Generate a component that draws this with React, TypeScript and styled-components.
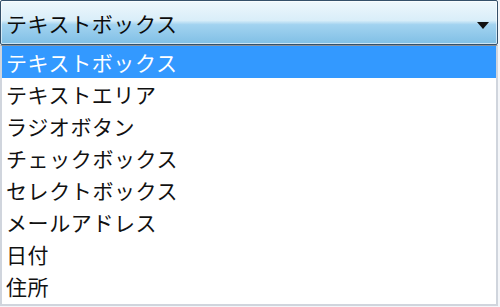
import * as React from "react";
import styled, { createGlobalStyle } from "styled-components";

const GlobalStyle = createGlobalStyle`
  html, body {
    margin: 0;
    padding: 0;
    background: #ffffff;
  }
  body {
    font-family: "Noto Sans CJK JP", "Noto Sans", sans-serif;
  }
`;

const Wrapper = styled.div`
  width: 500px;
  height: 307px;
  background: #f4f6f9;
  overflow: hidden;
`;

const Select = styled.div`
  width: 498px;
  display: flex;
  flex-direction: column;
`;

const Header = styled.div`
  height: 43px;
  border: 1px solid #34506a;
  border-radius: 2px;
  background: linear-gradient(
    to bottom,
    #eef7fc 0%,
    #d9eef9 45%,
    #a2d3f0 55%,
    #80bfe5 100%
  );
  display: flex;
  align-items: center;
  justify-content: space-between;
  padding: 0 8px 0 5px;
  box-shadow: inset 0 0 0 1px rgba(255, 255, 255, 0.6);
`;

const HeaderText = styled.span`
  font-size: 21px;
  color: #0c0c0c;
  letter-spacing: 0.6px;
  line-height: 1;
  padding-top: 1px;
`;

const Arrow = styled.span`
  width: 0;
  height: 0;
  border-left: 6px solid transparent;
  border-right: 6px solid transparent;
  border-top: 7px solid #111;
  margin-top: 6px;
`;

const List = styled.ul`
  list-style: none;
  margin: 0;
  padding: 0;
  height: 258px;
  background: #ffffff;
  border-left: 2px solid #d0d5dd;
  border-right: 2px solid #d0d5dd;
  border-bottom: 2px solid #d0d5dd;
  border-top: 1px solid #8a8f96;
`;

const Item = styled.li<{ $selected?: boolean }>`
  height: 32px;
  display: flex;
  align-items: center;
  padding-left: 4px;
  font-size: 21px;
  letter-spacing: 0.6px;
  color: ${(p) => (p.$selected ? "#ffffff" : "#111")};
  background: ${(p) => (p.$selected ? "#3399ff" : "transparent")};
`;

const items = [
  "テキストボックス",
  "テキストエリア",
  "ラジオボタン",
  "チェックボックス",
  "セレクトボックス",
  "メールアドレス",
  "日付",
  "住所",
];

const App = () => {
  return (
    <Wrapper>
      <GlobalStyle />
      <Select>
        <Header>
          <HeaderText>テキストボックス</HeaderText>
          <Arrow />
        </Header>
        <List>
          {items.map((label, i) => (
            <Item key={label} $selected={i === 0}>
              {label}
            </Item>
          ))}
        </List>
      </Select>
    </Wrapper>
  );
};

export default App;
